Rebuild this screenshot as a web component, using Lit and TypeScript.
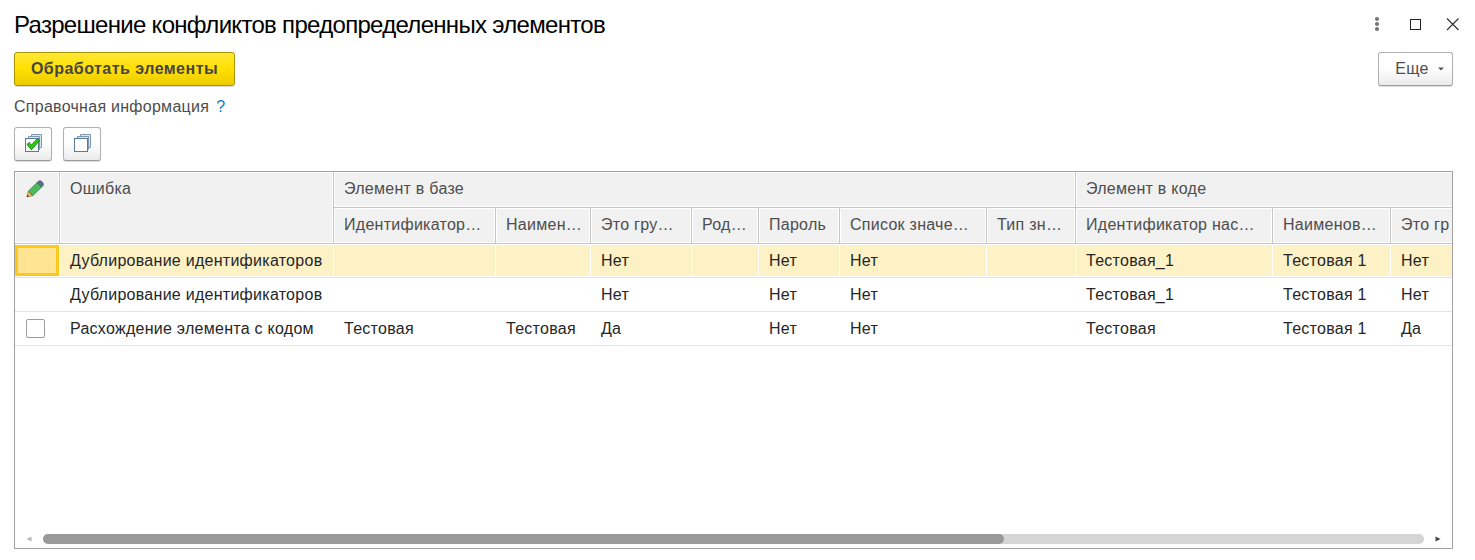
import { LitElement, html, css, svg, nothing } from "lit";
import { customElement } from "lit/decorators.js";

interface Row {
  check: boolean;
  selected?: boolean;
  cells: string[];
}

const heads = ["Идентификатор…", "Наимен…", "Это гру…", "Род…", "Пароль", "Список значе…", "Тип зн…", "Идентификатор нас…", "Наименов…", "Это гр"];

const rows: Row[] = [
  { check: false, selected: true, cells: ["Дублирование идентификаторов", "", "", "Нет", "", "Нет", "Нет", "", "Тестовая_1", "Тестовая 1", "Нет"] },
  { check: false, cells: ["Дублирование идентификаторов", "", "", "Нет", "", "Нет", "Нет", "", "Тестовая_1", "Тестовая 1", "Нет"] },
  { check: true, cells: ["Расхождение элемента с кодом", "Тестовая", "Тестовая", "Да", "", "Нет", "Нет", "", "Тестовая", "Тестовая 1", "Да"] },
];

const sheets = svg`
  <path d="M7.500 5.500V1.500H17.500V14.500H14.500" fill="#dce6ee" stroke="#7f98ac"/>
  <path d="M4.500 6.500V3.500H15.500V16.500H13.500" fill="#dce6ee" stroke="#7f98ac"/>
  <rect x="1.500" y="5.500" width="13" height="13" fill="#fff" stroke="#5b7a94"/>`;

@customElement("app-root")
export class AppRoot extends LitElement {
  static styles = css`
    :host {
      display: block;
      box-sizing: border-box;
      width: 1475px;
      height: 560px;
      padding: 10px 15px 11px 14px;
      background: #fff;
      color: #4d4d4d;
      font: 16px/20px "Liberation Sans", Arial, sans-serif;
      letter-spacing: 0.27px;
      overflow: hidden;
    }
    .title-bar { display: flex; justify-content: space-between; height: 30px; }
    .title { margin: 0; font-size: 24px; line-height: 30px; font-weight: 400; color: #000; letter-spacing: -0.7px; white-space: nowrap; }
    .window-icons { display: block; }
    .commands { display: flex; justify-content: space-between; width: 1439px; margin-top: 12px; }
    button {
      box-sizing: border-box;
      height: 34px;
      padding: 0;
      border: 1px solid #b0b0b0;
      border-bottom-color: #9c9c9c;
      border-radius: 3px;
      background: linear-gradient(#fff 45%, #ebebeb);
      box-shadow: 0 1px 1px rgba(0, 0, 0, 0.15);
      color: #4d4d4d;
      font: inherit;
      letter-spacing: inherit;
      display: flex;
      align-items: center;
      justify-content: center;
    }
    .primary {
      width: 221px;
      border-color: #a89500;
      background: linear-gradient(#ffe738, #ffe000 50%, #ebcb00);
      font-weight: 700;
      color: #454545;
      letter-spacing: 0.48px;
      white-space: nowrap;
    }
    .more { width: 75px; gap: 9px; padding-left: 8px; }
    .help { display: flex; gap: 7px; margin-top: 11px; height: 20px; white-space: nowrap; }
    .question { color: #0f7ac4; }
    .tools { display: flex; gap: 11px; margin-top: 10px; }
    .tools button { width: 38px; }
    .table {
      box-sizing: border-box;
      display: flex;
      flex-direction: column;
      width: 1439px;
      height: 378px;
      margin-top: 10px;
      border: 1px solid #a0a0a0;
      overflow: hidden;
    }
    .grid { display: grid; grid-template-columns: 45px 274px 162px 95px 101px 67px 81px 147px 89px 197px 118px 61px; }
    .head { grid-template-rows: 36px 36px; }
    .th, .td { box-sizing: border-box; white-space: nowrap; min-width: 0; }
    .th {
      border-right: 1px solid #c6c6c6;
      border-bottom: 1px solid #c6c6c6;
      box-shadow: inset 0 0 0 1px #fff;
      background: #f1f1f1;
      padding: 7px 0 0 10px;
    }
    .tall { grid-row: span 2; }
    .base { grid-column: 3 / span 7; }
    .code { grid-column: 10 / span 3; }
    .code, .last { border-right: 0; box-shadow: inset 1px 1px #fff, inset 0 -1px #fff; }
    .pencil { padding: 8px 0 0 11px; }
    .pencil svg { display: block; }
    .row { height: 34px; border-bottom: 1px solid #e3e3e3; box-sizing: border-box; color: #262626; }
    .td { height: 33px; padding: 7px 0 0 10px; }
    .selected .td {
      background: #fdf1c6;
      border: solid #fff;
      border-width: 1px 1px 1px 0;
      padding-top: 6px;
    }
    .selected .td:last-child { border-right: 0; }
    .selected .active { background: #ffe491; box-shadow: inset 0 0 0 3px #fcc81c; }
    .check { padding: 7px 0 0 11px; }
    .box { box-sizing: border-box; width: 19px; height: 19px; border: 1px solid #9c9c9c; border-radius: 2px; background: #fff; }
    .scroll { margin-top: auto; height: 19px; display: flex; align-items: center; gap: 9px; padding: 0 10px; box-sizing: border-box; }
    .track { flex: 1; height: 10px; border-radius: 5px; background: #d5d5d5; }
    .thumb { width: 961px; height: 10px; border-radius: 5px; background: #999; }
    .scroll svg { display: block; }
  `;

  private row(row: Row) {
    return html`<div class="grid row ${row.selected ? "selected" : ""}">
      <div class="td check ${row.selected ? "active" : ""}">${row.check ? html`<div class="box"></div>` : nothing}</div>
      ${row.cells.map((cell) => html`<div class="td">${cell}</div>`)}
    </div>`;
  }

  render() {
    return html`
      <div class="title-bar">
        <h1 class="title">Разрешение конфликтов предопределенных элементов</h1>
        <svg class="window-icons" width="90" height="30" viewBox="1370 10 90 30" fill="none">
          <g fill="#777"><circle cx="1377" cy="19" r="2.100"/><circle cx="1377" cy="24" r="2.100"/><circle cx="1377" cy="29" r="2.100"/></g>
          <rect x="1410.500" y="19.500" width="10" height="10" stroke="#222"/>
          <path d="M1447 18.500L1458.500 30M1458.500 18.500L1447 30" stroke="#333" stroke-width="1.200"/>
        </svg>
      </div>
      <div class="commands">
        <button class="primary">Обработать элементы</button>
        <button class="more">Еще<svg width="6" height="4" viewBox="0 0 6 4"><path d="M0 .5H6L3 3.500Z" fill="#555"/></svg></button>
      </div>
      <div class="help"><span>Справочная информация</span><span class="question">?</span></div>
      <div class="tools">
        <button aria-label="Установить флажки">
          <svg width="20" height="20" viewBox="-1 1 20 20">${sheets}
            <path d="M3 11.500L5.300 9.500L7.300 12.200L13.300 5.800L15.600 7.500L7.500 16.800Z" fill="#2bcb14" stroke="#138a0d"/>
          </svg>
        </button>
        <button aria-label="Снять флажки"><svg width="20" height="20" viewBox="-1 1 20 20">${sheets}</svg></button>
      </div>
      <div class="table">
        <div class="grid head">
          <div class="th tall pencil">
            <svg width="19" height="18" viewBox="0 0 19 18">
              <path d="M.8 17L2.300 11.200L6.900 15.600Z" fill="#f0b95c" stroke="#8f6a35" stroke-width=".7"/>
              <path d="M.8 17L1.400 14.700L3.100 16.400Z" fill="#444"/>
              <path d="M2.300 11.200L11.100 2.600L15.700 7L6.900 15.600Z" fill="#4cbb5c" stroke="#35804a" stroke-width=".8"/>
              <path d="M11.100 2.600L12.700 1Q14.300 .1 16.200 1.700Q18 3.600 17.200 5.500L15.700 7Z" fill="#5c7089" stroke="#485a70" stroke-width=".7"/>
            </svg>
          </div>
          <div class="th tall">Ошибка</div>
          <div class="th base">Элемент в базе</div>
          <div class="th code">Элемент в коде</div>
          ${heads.map((text, i) => html`<div class="th ${i === heads.length - 1 ? "last" : ""}">${text}</div>`)}
        </div>
        ${rows.map((r) => this.row(r))}
        <div class="scroll">
          <svg width="9" height="6" viewBox="0 0 9 6"><path d="M6.500 .5V5.500L1.500 3Z" fill="#b8b8b8"/></svg>
          <div class="track"><div class="thumb"></div></div>
          <svg width="9" height="6" viewBox="0 0 9 6"><path d="M2.500 .5V5.500L7.500 3Z" fill="#444"/></svg>
        </div>
      </div>
    `;
  }
}
